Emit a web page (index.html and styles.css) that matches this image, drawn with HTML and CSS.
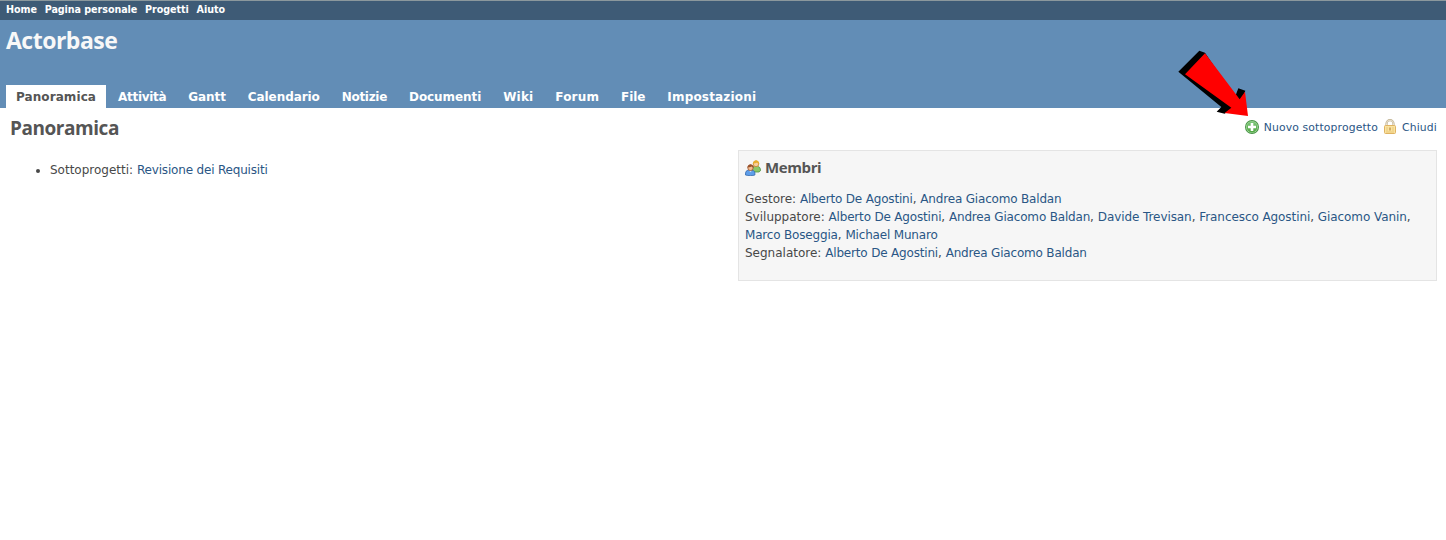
FILE: index.html
```html
<!DOCTYPE html>
<html lang="it">
<head>
<meta charset="utf-8">
<title>Actorbase</title>
<link rel="stylesheet" href="styles.css">
</head>
<body>
<nav class="top-menu"><a>Home</a><a>Pagina personale</a><a>Progetti</a><a>Aiuto</a></nav>
<header class="header">
  <h1>Actorbase</h1>
  <nav class="main-menu">
    <a class="selected">Panoramica</a><a class="narrow">Attività</a><a>Gantt</a><a>Calendario</a><a class="narrow">Notizie</a><a>Documenti</a><a class="wide">Wiki</a><a class="wide">Forum</a><a>File</a><a class="wide">Impostazioni</a>
  </nav>
</header>
<main class="content">
  <div class="title-row">
    <h2>Panoramica</h2>
    <div class="contextual">
      <a><svg class="icon" viewBox="0 0 16 16"><defs><linearGradient id="green" x2="0" y2="1"><stop stop-color="#7fc67b"/><stop offset="1" stop-color="#4fa641"/></linearGradient></defs><circle cx="8" cy="8" r="7" fill="#459343"/><circle cx="8" cy="8" r="6.1" fill="#a5d89d"/><circle cx="8" cy="8" r="5.4" fill="url(#green)"/><path d="M6.700 4h2.600v2.700H12v2.600H9.300V12H6.700V9.300H4V6.700h2.700z" fill="#fff"/></svg><span>Nuovo sottoprogetto</span></a>
      <a><svg class="icon" viewBox="0 0 16 16"><path d="M4.500 8V4.700a3.500 3.500 0 0 1 7 0V8" fill="none" stroke="#c0b292" stroke-width="2.200"/><path d="M4.500 8V4.700a3.500 3.500 0 0 1 7 0V8" fill="none" stroke="#eee8d8" stroke-width=".9"/><rect x="2.500" y="6.500" width="11" height="8" rx="1" fill="#fae3a0" stroke="#dfb362"/><path d="M4 9h2m4 0h2M4 11h2m4 0h2M4 13h8" stroke="#e9c778"/><path d="M8 8.500v3" stroke="#c59b52" stroke-width="1.500"/></svg><span>Chiudi</span></a>
    </div>
  </div>
  <div class="columns">
    <ul class="details"><li>Sottoprogetti: <a>Revisione dei Requisiti</a></li></ul>
    <section class="members">
      <h3><svg class="icon" viewBox="0 0 16 16"><path d="M6.500 11c-.3-3 1-4.500 3-4.500h3c2 0 3 1.500 3 4.200L14 12H8z" fill="#8cc869" stroke="#4d9340" stroke-width=".8"/><circle cx="11" cy="3.900" r="2.800" fill="#f9cfa0" stroke="#c88426" stroke-width=".8"/><path d="M7.900 4c0-5 6.300-5 6.300 0-1-.2-1.600-1-2-1.600C11 3.500 9 3 7.900 4z" fill="#e8ae2d"/><path d="M.5 15c-.3-3.500 1-4.700 3-4.700h3.400c2.300 0 3.300 1.500 3 4.700-2 .8-7 .8-9.400 0z" fill="#5e9eea" stroke="#3469ad" stroke-width=".8"/><path d="m4 10.500 1.500 1.800L7 10.500" fill="#d9edff"/><circle cx="5.500" cy="7.900" r="2.700" fill="#f4bd91" stroke="#98532e" stroke-width=".8"/><path d="M2.400 8c0-5 6.300-5 6.200 0-.8-.2-1.200-1.100-2-1.400C5 7.400 3.500 7 2.400 8z" fill="#985129"/></svg><span>Membri</span></h3>
      <p>Gestore: <a class="tight">Alberto De Agostini</a>, <a class="tight">Andrea Giacomo Baldan</a><br>
      Sviluppatore: <a class="tight">Alberto De Agostini</a>, <a class="tight">Andrea Giacomo Baldan</a>, <a>Davide Trevisan</a>, <a>Francesco Agostini</a>, <a>Giacomo Vanin</a>,<br>
      <a class="tight">Marco Boseggia</a>, <a class="tight">Michael Munaro</a><br>
      Segnalatore: <a class="tight">Alberto De Agostini</a>, <a class="tight">Andrea Giacomo Baldan</a></p>
    </section>
  </div>
</main>
<svg class="pointer" viewBox="0 0 270 285"><path d="M25 80 88 17l17 6 90 133 10-26 21 7-12 32-50 37-24-6 14-14z"/><path d="M45 88 105 25l104 138 16-23 9 73-70-9 20-16z" fill="#f00"/></svg>
</body>
</html>
```
FILE: styles.css
```css
body { margin: 0; background: #fff; color: #484848; font: 12px/18px "DejaVu Sans", Verdana, sans-serif; }
h1, h2, h3, p, ul { margin: 0; }
h1, h2, h3 { font-family: "Open Sans", "Trebuchet MS", sans-serif; font-weight: 700; }
a { color: #2a5685; }
.top-menu { box-sizing: border-box; height: 20px; border-top: 1px solid #8b989d; padding: 0 6px; background: #3e5b76; display: flex; gap: 7.8px; font-size: 9.6px; font-weight: bold; line-height: 17px; letter-spacing: -.06px; }
.top-menu a { color: #fff; }
.header { box-sizing: border-box; height: 88px; padding: 3px 6px 0; background: #628db6; display: flex; flex-direction: column; justify-content: space-between; }
.header h1 { color: #f8f8f8; font-size: 23px; line-height: 34px; letter-spacing: -.5px; }
.main-menu { display: flex; gap: 2px; font-weight: bold; letter-spacing: -.08px; }
.main-menu a { color: #fff; padding: 3px 10px 2px; }
.main-menu .selected { color: #555; background: #fff; letter-spacing: .08px; }
.main-menu .narrow { letter-spacing: -.3px; }
.main-menu .wide { letter-spacing: .17px; }
.content { padding: 8px 9px 0 10px; }
.title-row { display: flex; justify-content: space-between; height: 34px; }
.title-row h2 { color: #555; font-size: 19px; line-height: 24px; letter-spacing: -.45px; }
.contextual { display: flex; gap: 4px; font-size: 10.8px; line-height: 23px; letter-spacing: .15px; }
.contextual a { display: flex; gap: 4px; }
.icon { width: 16px; height: 16px; flex: none; }
.contextual .icon { margin-top: 3px; }
.columns { display: flex; justify-content: space-between; align-items: flex-start; }
.details { padding: 11px 0 0 40px; }
.details a { letter-spacing: -.18px; }
.members { box-sizing: border-box; width: 699px; height: 131px; border: 1px solid #e4e4e4; padding: 6px; background: #f6f6f6; white-space: nowrap; }
.members h3 { display: flex; gap: 4px; color: #555; font-size: 15px; line-height: 21px; margin-bottom: 12px; letter-spacing: -.4px; }
.members h3 .icon { margin-top: 3px; }
.members p a { letter-spacing: -.08px; }
.members p .tight { letter-spacing: -.18px; }
.pointer { position: absolute; left: 1170px; top: 45px; width: 90px; height: 95px; }
```
